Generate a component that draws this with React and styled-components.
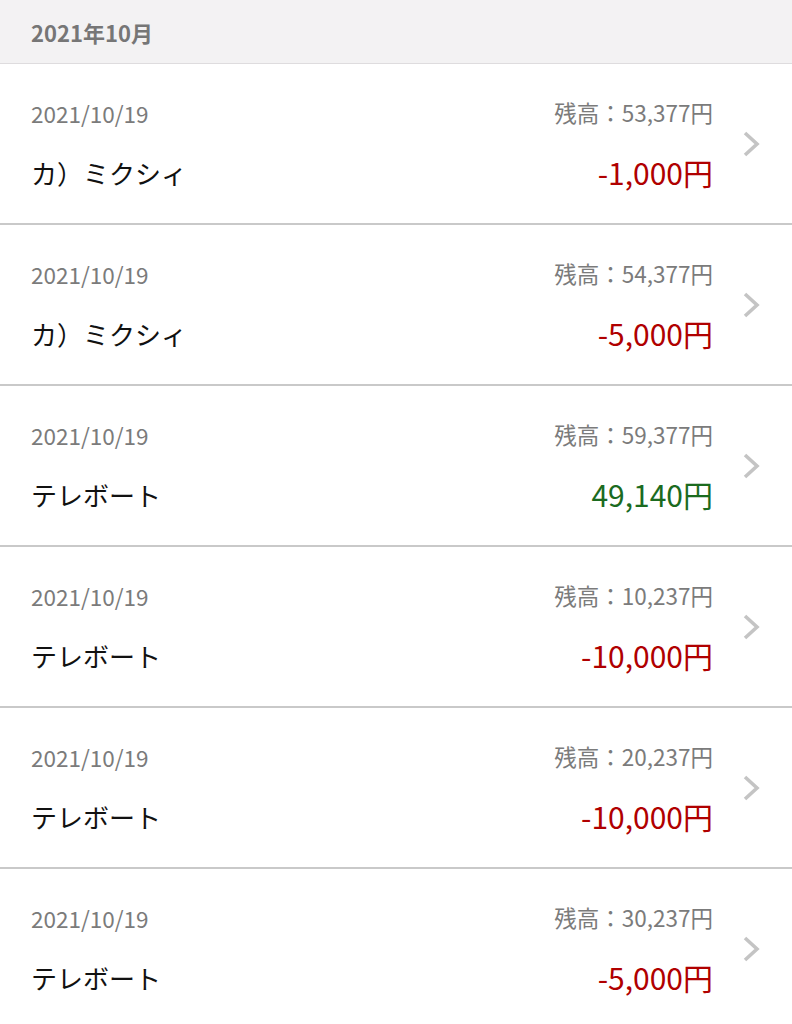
import React from 'react';
import styled, { createGlobalStyle } from 'styled-components';

const GlobalStyle = createGlobalStyle`
  body {
    margin: 0;
    background: #fff;
    font-family: "Noto Sans CJK JP", "Noto Sans", sans-serif;
  }
`;

const MonthHeader = styled.div`
  height: 63px;
  background: #f3f2f3;
  border-bottom: 1px solid #dedcde;
  display: flex;
  align-items: center;
  padding-left: 31px;
  font-size: 22px;
  font-weight: 700;
  color: #767676;
`;

const Row = styled.div`
  height: 159px;
  border-bottom: 2px solid #c9c9c9;
  display: grid;
  grid-template-columns: 1fr auto 18px;
  column-gap: 29px;
  align-items: center;
  padding: 3px 32px 0 31px;
  box-sizing: border-box;
  height: 161px;
`;

const Left = styled.div`
  display: flex;
  flex-direction: column;
  gap: 28px;
`;

const Right = styled.div`
  display: flex;
  flex-direction: column;
  align-items: flex-end;
  gap: 26px;
`;

const DateText = styled.div`
  font-size: 22.5px;
  line-height: 28px;
  color: #7b7b7b;
`;

const Name = styled.div`
  font-size: 26px;
  line-height: 36px;
  color: #111;
`;

const Balance = styled.div`
  font-size: 22.5px;
  line-height: 28px;
  color: #7b7b7b;
`;

const Amount = styled.div`
  font-size: 30px;
  line-height: 40px;
  color: ${({ income }) => (income ? '#1b6b1f' : '#b00000')};
`;

const ChevronBox = styled.div`
  display: flex;
  align-items: center;
  margin-top: -3px;
`;

const Chevron = () => (
  <ChevronBox>
    <svg width="18" height="28" viewBox="0 0 18 28">
      <path d="M3 3 L15 14 L3 25" fill="none" stroke="#c4c4c4" strokeWidth="3.6" />
    </svg>
  </ChevronBox>
);

const items = [
  { name: 'カ）ミクシィ', balance: '53,377円', amount: '-1,000円' },
  { name: 'カ）ミクシィ', balance: '54,377円', amount: '-5,000円' },
  { name: 'テレボート', balance: '59,377円', amount: '49,140円', income: true },
  { name: 'テレボート', balance: '10,237円', amount: '-10,000円' },
  { name: 'テレボート', balance: '20,237円', amount: '-10,000円' },
  { name: 'テレボート', balance: '30,237円', amount: '-5,000円' },
];

export default function App() {
  return (
    <>
      <GlobalStyle />
      <MonthHeader>2021年10月</MonthHeader>
      {items.map((item, i) => (
        <Row key={i}>
          <Left>
            <DateText>2021/10/19</DateText>
            <Name>{item.name}</Name>
          </Left>
          <Right>
            <Balance>残高：{item.balance}</Balance>
            <Amount income={item.income}>{item.amount}</Amount>
          </Right>
          <Chevron />
        </Row>
      ))}
    </>
  );
}
